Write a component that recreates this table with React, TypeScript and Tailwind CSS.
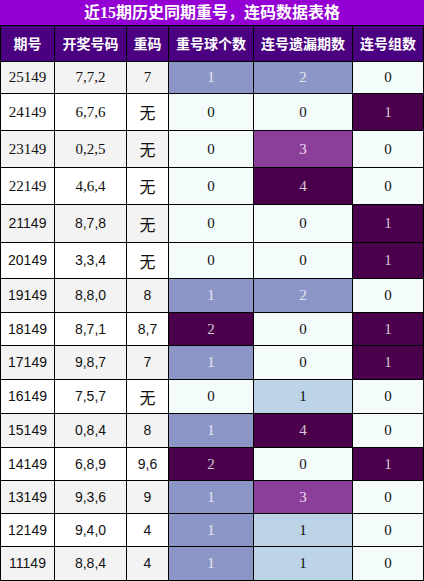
import React from "react";

type Tone = "n" | "s" | "d" | "p" | "l";
type Row = { q: string; k: string; c: string; v: [string, Tone][]; h: string; serif: boolean; alt: boolean };

const rows: Row[] = [
  { q: "25149", k: "7,7,2", c: "7", v: [["1", "s"], ["2", "s"], ["0", "n"]], h: "h-[32px]", serif: true, alt: true },
  { q: "24149", k: "6,7,6", c: "无", v: [["0", "n"], ["0", "n"], ["1", "d"]], h: "h-[37px]", serif: true, alt: false },
  { q: "23149", k: "0,2,5", c: "无", v: [["0", "n"], ["3", "p"], ["0", "n"]], h: "h-[37px]", serif: true, alt: true },
  { q: "22149", k: "4,6,4", c: "无", v: [["0", "n"], ["4", "d"], ["0", "n"]], h: "h-[37px]", serif: true, alt: false },
  { q: "21149", k: "8,7,8", c: "无", v: [["0", "n"], ["0", "n"], ["1", "d"]], h: "h-[38px]", serif: false, alt: true },
  { q: "20149", k: "3,3,4", c: "无", v: [["0", "n"], ["0", "n"], ["1", "d"]], h: "h-[36px]", serif: false, alt: false },
  { q: "19149", k: "8,8,0", c: "8", v: [["1", "s"], ["2", "s"], ["0", "n"]], h: "h-[34px]", serif: false, alt: true },
  { q: "18149", k: "8,7,1", c: "8,7", v: [["2", "d"], ["0", "n"], ["1", "d"]], h: "h-[33px]", serif: false, alt: false },
  { q: "17149", k: "9,8,7", c: "7", v: [["1", "s"], ["0", "n"], ["1", "d"]], h: "h-[34px]", serif: false, alt: true },
  { q: "16149", k: "7,5,7", c: "无", v: [["0", "n"], ["1", "l"], ["0", "n"]], h: "h-[34px]", serif: false, alt: false },
  { q: "15149", k: "0,8,4", c: "8", v: [["1", "s"], ["4", "d"], ["0", "n"]], h: "h-[34px]", serif: false, alt: true },
  { q: "14149", k: "6,8,9", c: "9,6", v: [["2", "d"], ["0", "n"], ["1", "d"]], h: "h-[33px]", serif: false, alt: false },
  { q: "13149", k: "9,3,6", c: "9", v: [["1", "s"], ["3", "p"], ["0", "n"]], h: "h-[33px]", serif: false, alt: true },
  { q: "12149", k: "9,4,0", c: "4", v: [["1", "s"], ["1", "l"], ["0", "n"]], h: "h-[33px]", serif: false, alt: false },
  { q: "11149", k: "8,8,4", c: "4", v: [["1", "s"], ["1", "l"], ["0", "n"]], h: "h-[34px]", serif: false, alt: true },
];

const toneCls: Record<Tone, string> = {
  n: "bg-[#f4fbfb] text-[#111]",
  s: "bg-[#8b96c6] text-[#e4e6f2]",
  d: "bg-[#4b004b] text-[#d8c8d8]",
  p: "bg-[#8b3f9b] text-[#eedcf2]",
  l: "bg-[#bdd3e8] text-[#111]",
};

const cols = "grid grid-cols-[54px_72px_42px_85px_99px_71px]";
const cell = "flex items-center justify-center border-r border-b border-black";
const serifFont = "[font-family:'Liberation_Serif','Noto_Sans_CJK_SC',serif] text-[15px]";
const sansFont = "[font-family:'Liberation_Sans','Noto_Sans_CJK_SC',sans-serif] text-[14px]";

export default function App() {
  const headers = ["期号", "开奖号码", "重码", "重号球个数", "连号遗漏期数", "连号组数"];
  return (
    <div className="w-[424px] bg-white">
      <div className="h-[26px] bg-[#9400d3] border-b border-black flex items-center justify-center text-white font-bold text-[16px] [font-family:'Liberation_Serif','Noto_Sans_CJK_SC',serif]">
        近15期历史同期重号，连码数据表格
      </div>
      <div className="border-l border-black">
        <div className={`${cols} h-[36px] bg-[#4b0082] text-white font-bold text-[14px] [font-family:'Noto_Sans_CJK_SC',sans-serif]`}>
          {headers.map((h) => (
            <div key={h} className={cell}>
              {h}
            </div>
          ))}
        </div>
        {rows.map((r) => {
          const font = r.serif ? serifFont : sansFont;
          const base = r.alt ? "bg-[#f3f3f3]" : "bg-white";
          return (
            <div key={r.q} className={`${cols} ${r.h} text-[#111]`}>
              <div className={`${cell} ${base} ${font}`}>{r.q}</div>
              <div className={`${cell} ${base} ${font}`}>{r.k}</div>
              <div
                className={`${cell} ${base} ${
                  r.c === "无" ? "text-[16px] [font-family:'Noto_Sans_CJK_SC',sans-serif]" : font
                }`}
              >
                {r.c}
              </div>
              {r.v.map(([val, t], i) => (
                <div key={i} className={`${cell} ${toneCls[t]} ${serifFont}`}>
                  {val}
                </div>
              ))}
            </div>
          );
        })}
      </div>
    </div>
  );
}
